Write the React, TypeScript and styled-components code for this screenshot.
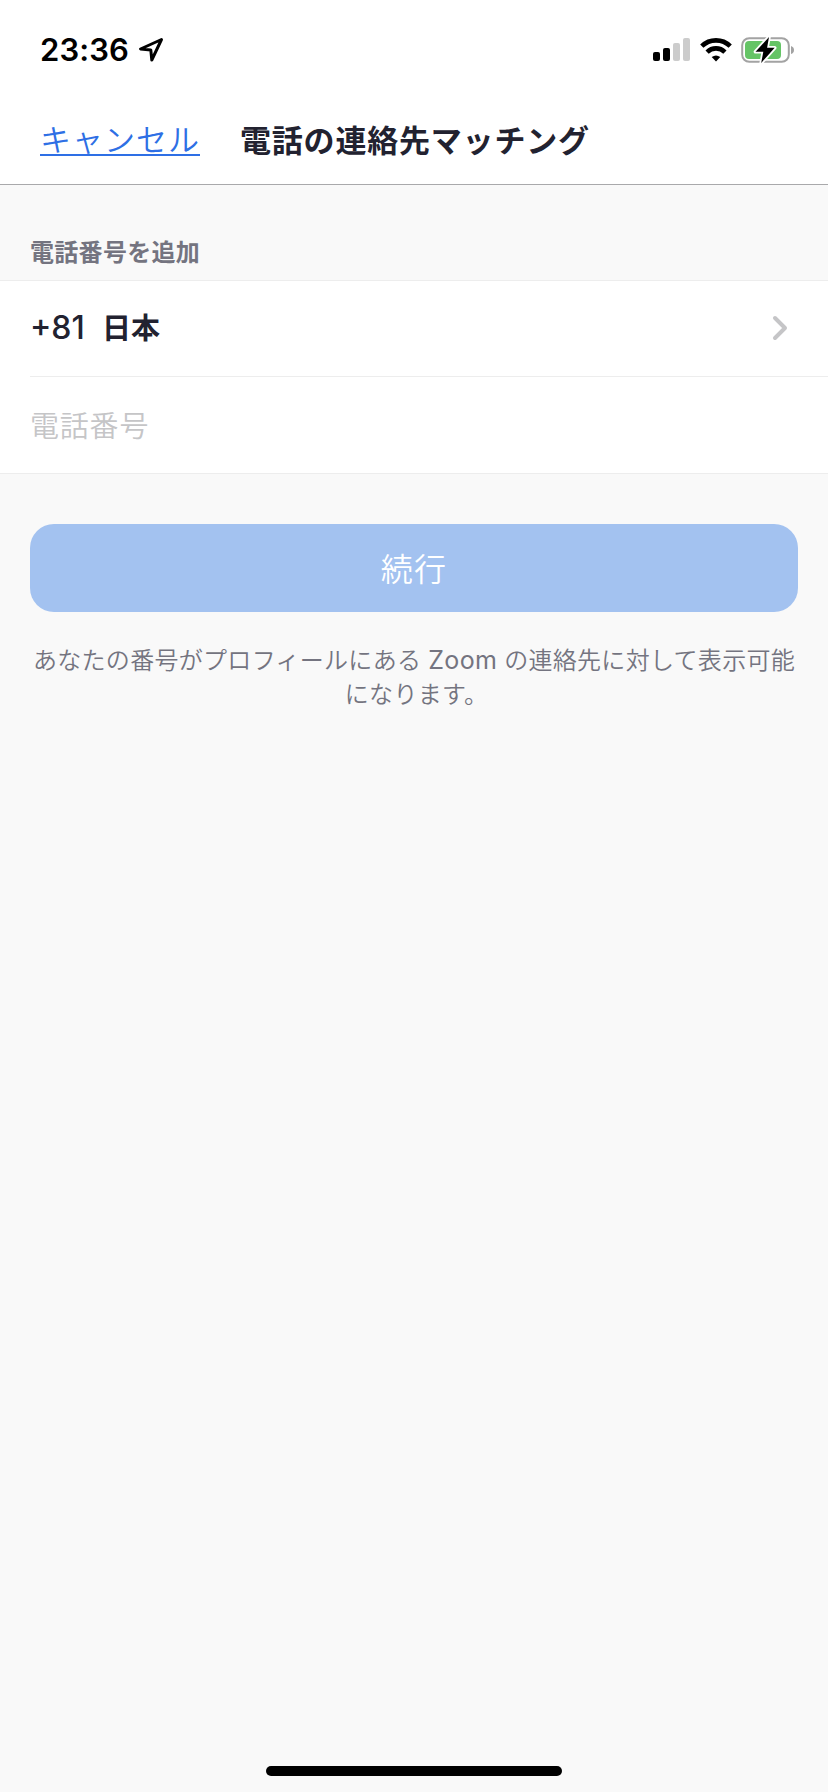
import React from "react";
import styled, { createGlobalStyle } from "styled-components";

const GlobalStyle = createGlobalStyle`
  * { box-sizing: border-box; }
  body {
    margin: 0;
    background: #f9f9f9;
    font-family: Inter, "Noto Sans CJK JP", sans-serif;
    color: #222230;
  }
`;

const Screen = styled.div`
  display: flex;
  flex-direction: column;
  width: 828px;
  height: 1792px;
  background: #f9f9f9;
`;

const Header = styled.header`
  height: 185px;
  background: #fff;
  border-bottom: 1px solid #a9a9ab;
`;

const StatusBar = styled.div`
  display: flex;
  align-items: center;
  height: 100px;
  padding: 0 33px 0 40px;
`;

const Clock = styled.span`
  width: 97px;
  color: #000;
  font-size: 31px;
  font-weight: 600;
  letter-spacing: 0.1px;
  line-height: 40px;
  white-space: nowrap;
`;

const StatusIcons = styled.div`
  display: flex;
  align-items: center;
  margin-left: auto;
`;

const NavBar = styled.nav`
  display: flex;
  align-items: flex-start;
  height: 84px;
  padding: 20px 0 0 40px;
`;

const CancelLink = styled.a`
  width: 160px;
  height: 36px;
  border-bottom: 2px solid #2e6fe5;
  color: #2e6fe5;
  font-size: 31px;
  font-weight: 350;
  letter-spacing: 1px;
  line-height: 40px;
  white-space: nowrap;
`;

const Title = styled.h1`
  margin: 0 0 0 40px;
  font-size: 31px;
  font-weight: 700;
  letter-spacing: 0.8px;
  line-height: 42px;
  white-space: nowrap;
`;

const SectionLabel = styled.h2`
  height: 95px;
  margin: 0;
  padding: 49px 30px 0;
  color: #747480;
  font-size: 24px;
  font-weight: 700;
  letter-spacing: 0.3px;
  line-height: 38px;
`;

const FieldGroup = styled.section`
  height: 194px;
  padding-left: 30px;
  background: #fff;
  border-top: 1px solid #ededed;
  border-bottom: 1px solid #ededed;
`;

const CountryRow = styled.div`
  display: flex;
  align-items: center;
  height: 96px;
  padding: 0 40px 1px 0;
  border-bottom: 1px solid #ededed;
  font-size: 32px;
  font-weight: 500;
  line-height: 40px;
`;

const DialCode = styled.span`
  width: 72px;
`;

const Country = styled.span`
  flex: 1;
  padding-top: 2px;
  font-size: 29px;
  font-weight: 700;
`;

const PhoneInput = styled.input`
  display: block;
  width: 100%;
  height: 96px;
  padding: 3px 0 0;
  border: 0;
  outline: 0;
  background: transparent;
  font: 350 29px Inter, "Noto Sans CJK JP", sans-serif;
  letter-spacing: 0.8px;
  &::placeholder { color: #c5c5c7; opacity: 1; }
`;

const ContinueButton = styled.button`
  height: 88px;
  margin: 50px 30px 0;
  padding: 0 0 2px;
  border: 0;
  border-radius: 24px;
  background: #a3c2f0;
  color: #fff;
  font: 350 32px Inter, "Noto Sans CJK JP", sans-serif;
  letter-spacing: 1.2px;
`;

const Note = styled.p`
  margin: 32px 0 0;
  color: #747480;
  font-size: 24px;
  font-weight: 350;
  letter-spacing: 0.3px;
  line-height: 34px;
  text-align: center;
`;

const Brand = styled.span`
  font-size: 25px;
  font-weight: 400;
  line-height: 1;
`;

const NoteEnd = styled.span`
  padding-left: 5px;
`;

const HomeIndicator = styled.div`
  width: 296px;
  height: 10px;
  margin: auto auto 16px;
  border-radius: 5px;
  background: #000;
`;

const LocationIcon = () => (
  <svg width="28" height="28" viewBox="0 0 28 28">
    <path d="M24.5 3.5 3.5 13l10.3.9L14.8 24Z" fill="none" stroke="#000" strokeWidth="3" strokeLinejoin="round" />
  </svg>
);

const SignalIcon = () => (
  <svg width="38" height="24" viewBox="0 0 38 24">
    <rect x="0" y="14" width="7" height="9" rx="2" />
    <rect x="10" y="10" width="7" height="13" rx="2" />
    <rect x="20" y="5" width="7" height="18" rx="2" fill="#ccc" />
    <rect x="30" y="0" width="7" height="23" rx="2" fill="#ccc" />
  </svg>
);

const WifiIcon = () => (
  <svg width="32" height="24" viewBox="0 0 32 24">
    <g fill="none" stroke="#000" strokeWidth="4.6">
      <path d="M1.8 8.2a20.2 20.2 0 0 1 28.4 0" />
      <path d="M7.1 14.1a12.6 12.6 0 0 1 17.8 0" />
    </g>
    <path d="M16 23.6l-4.3-4.5q4.3-3.4 8.6 0Z" />
  </svg>
);

const BatteryIcon = () => (
  <svg width="54" height="28" viewBox="0 0 54 28">
    <rect x="1.2" y="2.2" width="46.6" height="23.6" rx="7" fill="#fff" stroke="#a3a3a3" strokeWidth="2" />
    <rect x="4" y="5" width="36" height="18" rx="4" fill="#65c466" />
    <path d="M50 10q3 1 3 4t-3 4Z" fill="#a3a3a3" />
    <path d="M28 1 14.5 15.8h7.8L20.2 27 33.7 11.8h-7.6Z" fill="#000" stroke="#fff" strokeWidth="3.6" strokeLinejoin="round" paintOrder="stroke" />
  </svg>
);

const ChevronIcon = () => (
  <svg width="16" height="26" viewBox="0 0 16 26">
    <path d="m3 3 10 10L3 23" fill="none" stroke="#c5c5c7" strokeWidth="4" strokeLinecap="round" strokeLinejoin="round" />
  </svg>
);

const IconGap = styled.span<{ $size: number }>`
  width: ${(p) => p.$size}px;
`;

export default function App() {
  return (
    <Screen>
      <GlobalStyle />
      <Header>
        <StatusBar>
          <Clock>23:36</Clock>
          <LocationIcon />
          <StatusIcons>
            <SignalIcon />
            <IconGap $size={9} />
            <WifiIcon />
            <IconGap $size={9} />
            <BatteryIcon />
          </StatusIcons>
        </StatusBar>
        <NavBar>
          <CancelLink>キャンセル</CancelLink>
          <Title>電話の連絡先マッチング</Title>
        </NavBar>
      </Header>
      <SectionLabel>電話番号を追加</SectionLabel>
      <FieldGroup>
        <CountryRow>
          <DialCode>+81</DialCode>
          <Country>日本</Country>
          <ChevronIcon />
        </CountryRow>
        <PhoneInput placeholder="電話番号" />
      </FieldGroup>
      <ContinueButton>続行</ContinueButton>
      <Note>
        あなたの番号がプロフィールにある <Brand>Zoom</Brand> の連絡先に対して表示可能
        <br />
        <NoteEnd>になります。</NoteEnd>
      </Note>
      <HomeIndicator />
    </Screen>
  );
}
